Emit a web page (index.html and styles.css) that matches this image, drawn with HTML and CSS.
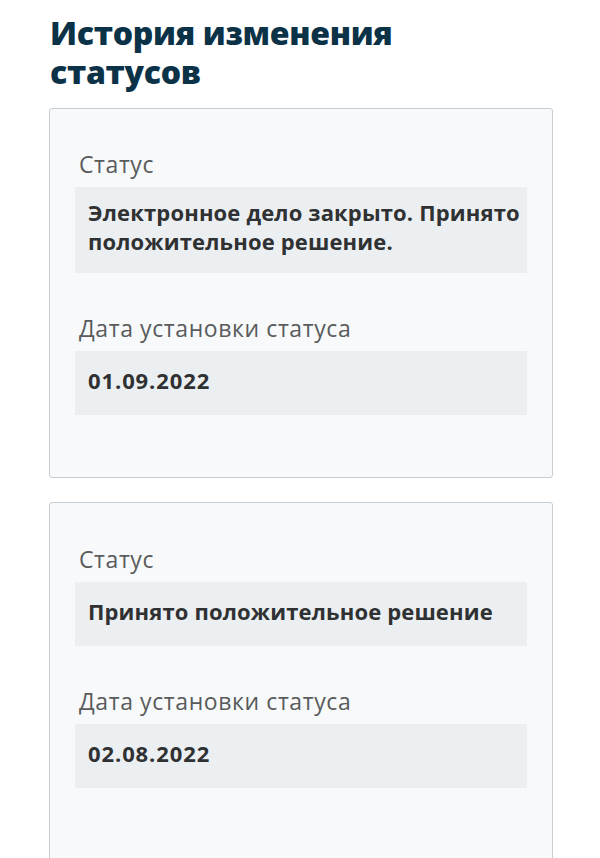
FILE: index.html
```html
<!DOCTYPE html>
<html lang="ru">
<head>
<meta charset="utf-8">
<link rel="stylesheet" href="styles.css">
</head>
<body>
<main class="page">
  <h1 class="title">История изменения статусов</h1>
  <section class="card">
    <div class="field">
      <div class="label">Статус</div>
      <div class="value">Электронное дело закрыто. Принято положительное решение.</div>
    </div>
    <div class="field">
      <div class="label">Дата установки статуса</div>
      <div class="value date">01.09.2022</div>
    </div>
  </section>
  <section class="card card-last">
    <div class="field">
      <div class="label">Статус</div>
      <div class="value">Принято положительное решение</div>
    </div>
    <div class="field">
      <div class="label">Дата установки статуса</div>
      <div class="value date">02.08.2022</div>
    </div>
  </section>
</main>
</body>
</html>
```
FILE: styles.css
```css
html, body {
  margin: 0;
  padding: 0;
  background: #ffffff;
}
body {
  font-family: "Open Sans", "Noto Sans", sans-serif;
  color: #333;
}
.page {
  padding: 0 47px 0 49px;
  display: flex;
  flex-direction: column;
  gap: 24px;
}
.title {
  margin: 13px 0 -7px 1px;
  max-width: 400px;
  font-size: 32px;
  line-height: 39px;
  font-weight: 800;
  color: #0c3248;
  letter-spacing: -0.3px;
}
.card {
  border: 1px solid #c6ced3;
  border-radius: 3px;
  background: #f7f9fa;
  padding: 0 25px 62px 25px;
  display: flex;
  flex-direction: column;
}
.card-last {
  padding-bottom: 120px;
}
.field {
  margin-top: 41px;
  display: flex;
  flex-direction: column;
}
.card-last .field:first-child {
  margin-top: 42px;
}
.label {
  font-size: 23px;
  line-height: 28px;
  font-weight: 400;
  color: #595b5c;
  padding-left: 4px;
  margin-bottom: 9px;
  letter-spacing: 0.6px;
}
.value {
  background: #eceff1;
  min-height: 64px;
  box-sizing: border-box;
  padding: 11px 6px 17px 13px;
  display: flex;
  align-items: center;
  font-size: 22px;
  line-height: 29px;
  font-weight: 700;
  color: #2f3133;
  letter-spacing: 0.15px;
}
.date {
  letter-spacing: 0.9px;
}
```
